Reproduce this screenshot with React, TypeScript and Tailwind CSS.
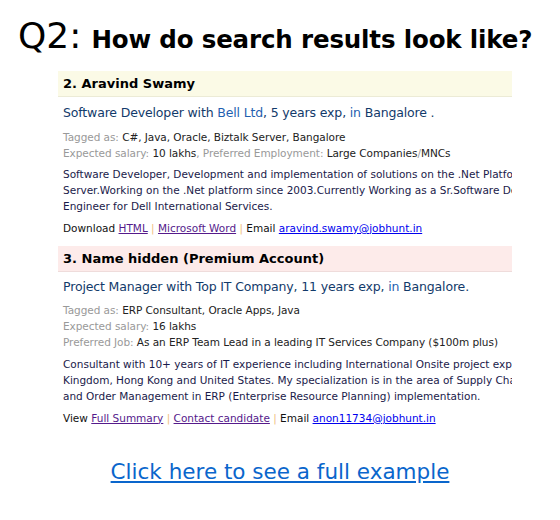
export default function App() {
  const f = { fontFamily: '"DejaVu Sans", Verdana, sans-serif' };
  return (
    <div className="w-[560px] h-[520px] bg-white relative overflow-hidden" style={f}>
      <div className="pt-[14px] pl-[18px] flex items-baseline text-black whitespace-nowrap">
        <span className="text-[36px] leading-[44px]">Q2:</span>
        <span className="text-[24.5px] font-bold ml-[10px] tracking-[-0.15px]">How do search results look like?</span>
      </div>
      <div className="ml-[58px] w-[454px] overflow-hidden mt-[12px] whitespace-nowrap">
        <div className="h-[26px] bg-[#fbfae6] border-b border-[#ecebd6] pl-[5px] flex items-center text-[13px] font-bold text-black">
          2. Aravind Swamy
        </div>
        <div className="pl-[5px] pt-[7px] text-[12.5px] tracking-[-0.15px] text-[#123a6a] leading-[18px]">
          Software Developer with <span className="text-[#1f5fb0]">Bell Ltd</span>, 5 years exp, <span className="text-[#1f5fb0]">in</span> Bangalore .
        </div>
        <div className="pl-[5px] pt-[7px] text-[10.5px] tracking-[-0.05px] leading-[16px] text-[#999]">
          <div>Tagged as: <span className="text-[#222]">C#, Java, Oracle, Biztalk Server, Bangalore</span></div>
          <div>Expected salary: <span className="text-[#222]">10 lakhs</span>, Preferred Employment: <span className="text-[#222]">Large Companies</span>/<span className="text-[#222]">MNCs</span></div>
        </div>
        <div className="pl-[5px] pt-[5px] text-[10.5px] leading-[16px] text-[#1a1a4a]">
          <div>Software Developer, Development and implementation of solutions on the .Net Platform using C#, Biztalk</div>
          <div>Server.Working on the .Net platform since 2003.Currently Working as a Sr.Software Developer/Lead</div>
          <div>Engineer for Dell International Services.</div>
        </div>
        <div className="pl-[5px] pt-[6px] text-[10.5px] leading-[16px] text-[#111]">
          Download <a className="underline text-[#551a8b]">HTML</a> <span className="text-[#f0c080]">|</span> <a className="underline text-[#551a8b]">Microsoft Word</a> <span className="text-[#f0c080]">|</span> Email <a className="underline text-[#0000ee]">aravind.swamy@jobhunt.in</a>
        </div>

        <div className="mt-[10px] h-[26px] bg-[#fdebea] border-b border-[#efdcdb] pl-[5px] flex items-center text-[13px] font-bold text-black">
          3. Name hidden (Premium Account)
        </div>
        <div className="pl-[5px] pt-[6px] text-[12.5px] tracking-[-0.15px] text-[#123a6a] leading-[18px]">
          Project Manager with Top IT Company, 11 years exp, <span className="text-[#1f5fb0]">in</span> Bangalore.
        </div>
        <div className="pl-[5px] pt-[6px] text-[10.5px] tracking-[-0.05px] leading-[16px] text-[#999]">
          <div>Tagged as: <span className="text-[#222]">ERP Consultant, Oracle Apps, Java</span></div>
          <div>Expected salary: <span className="text-[#222]">16 lakhs</span></div>
          <div>Preferred Job: <span className="text-[#222]">As an ERP Team Lead in a leading IT Services Company ($100m plus)</span></div>
        </div>
        <div className="pl-[5px] pt-[6px] text-[10.5px] leading-[16px] text-[#1a1a4a]">
          <div>Consultant with 10+ years of IT experience including International Onsite project experience in United</div>
          <div>Kingdom, Hong Kong and United States. My specialization is in the area of Supply Chain Management</div>
          <div>and Order Management in ERP (Enterprise Resource Planning) implementation.</div>
        </div>
        <div className="pl-[5px] pt-[6px] text-[10.5px] leading-[16px] text-[#111]">
          View <a className="underline text-[#551a8b]">Full Summary</a> <span className="text-[#f0c080]">|</span> <a className="underline text-[#551a8b]">Contact candidate</a> <span className="text-[#f0c080]">|</span> Email <a className="underline text-[#0000ee]">anon11734@jobhunt.in</a>
        </div>
      </div>
      <div className="mt-[30px] text-center">
        <a className="text-[21.5px] underline text-[#0a66cc]">Click here to see a full example</a>
      </div>
    </div>
  );
}
